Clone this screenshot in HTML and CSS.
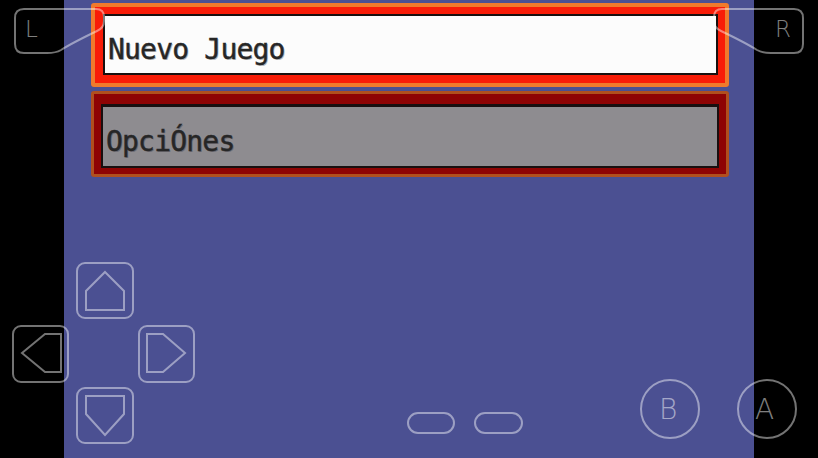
FILE: index.html
```html
<!DOCTYPE html>
<html lang="es">
<head>
    <meta charset="UTF-8">
    <meta name="viewport" content="width=device-width, initial-scale=1.0">
    <title>Emulador</title>
    <link rel="stylesheet" href="styles.css">
</head>
<body>
    <div id="screen">
        <div class="menu-item selected">
            <div class="field">Nuevo Juego</div>
        </div>
        <div class="menu-item">
            <div class="field">OpciÓnes</div>
        </div>
    </div>

    <div id="controls">
        <svg class="pad shoulder-l" width="96" height="52" viewBox="12 6 96 52">
            <path d="M24 9 H96 Q104 9 104 17 V21 Q104 28 97 31 Q72 43 61 50 Q56 53 47 53 H24 Q15 53 15 44 V18 Q15 9 24 9 Z"/>
            <text x="25" y="37">L</text>
        </svg>
        <svg class="pad shoulder-r" width="96" height="52" viewBox="710 6 96 52">
            <path d="M794 9 H722 Q714 9 714 17 V21 Q714 28 721 31 Q746 43 757 50 Q762 53 771 53 H794 Q803 53 803 44 V18 Q803 9 794 9 Z"/>
            <text x="775" y="37">R</text>
        </svg>
        <svg class="pad dpad" width="190" height="188" viewBox="10 258 190 188">
            <rect x="77" y="263" width="56" height="55" rx="8"/>
            <path d="M105 272 L124 291 V310 H86 V291 Z"/>
            <rect x="13" y="326" width="55" height="56" rx="8"/>
            <path d="M22 353 L45 334 H61 V372 H45 Z"/>
            <rect x="139" y="326" width="55" height="56" rx="8"/>
            <path d="M147 334 H163 L185 353 L163 372 H147 Z"/>
            <rect x="77" y="388" width="56" height="55" rx="8"/>
            <path d="M86 396 H124 V414 L105 435 L86 414 Z"/>
        </svg>
        <svg class="pad system" width="120" height="26" viewBox="404 410 120 26">
            <rect x="408" y="413" width="46" height="20" rx="10"/>
            <rect x="475" y="413" width="47" height="20" rx="10"/>
        </svg>
        <svg class="pad face" width="170" height="66" viewBox="638 376 170 66">
            <circle cx="670" cy="409" r="29"/>
            <text x="659" y="419">B</text>
            <circle cx="767" cy="409" r="29"/>
            <text x="755" y="419">A</text>
        </svg>
    </div>
</body>
</html>
```

FILE: styles.css
```css
body { margin: 0; padding: 0; background-color: #000; width: 818px; height: 458px; overflow: hidden; position: relative; font-family: "DejaVu Sans", sans-serif; }
#screen { margin-left: 64px; width: 690px; height: 458px; box-sizing: border-box; padding: 3px 25px 0 27px; background-color: #4b5092; display: flex; flex-direction: column; gap: 4px; }

.menu-item { border: 3px solid #b0501e; background-color: #8e0404; padding: 10px 7px 6px 7px; border-radius: 3px; }
.menu-item .field { border: 2px solid #181010; border-top-width: 3px; background-color: #8e8c90; padding-left: 3px; display: flex; align-items: center; padding-top: 9px; height: 50px;
    font-family: "DejaVu Sans Mono", monospace; font-size: 28px; letter-spacing: -0.8px; color: #262626; text-shadow: 1px 1px 0 #6e6c72; -webkit-text-stroke: 0.4px #262626; }
.menu-item.selected { border: 4px solid #f07a2c; background-color: #f81c08; padding: 7px 7px 8px 8px; }
.menu-item.selected .field { background-color: #fcfcfc; border-width: 2px; height: 48px; padding-top: 9px; text-shadow: 1px 1px 0 #b8b8b8; }

#controls { position: absolute; left: 0; top: 0; width: 818px; height: 458px; pointer-events: none; }
.pad { position: absolute; overflow: visible; }
.pad rect, .pad path, .pad circle { fill: none; stroke: rgba(255, 255, 255, 0.45); stroke-width: 2; }
.pad text { fill: rgba(255, 255, 255, 0.5); font-family: "DejaVu Sans", sans-serif; font-weight: 300; font-size: 23px; }
.shoulder-l { left: 12px; top: 6px; }
.shoulder-r { left: 710px; top: 6px; }
.dpad { left: 10px; top: 258px; }
.system { left: 404px; top: 410px; }
.face { left: 638px; top: 376px; }
.face text { font-size: 28px; }
```
